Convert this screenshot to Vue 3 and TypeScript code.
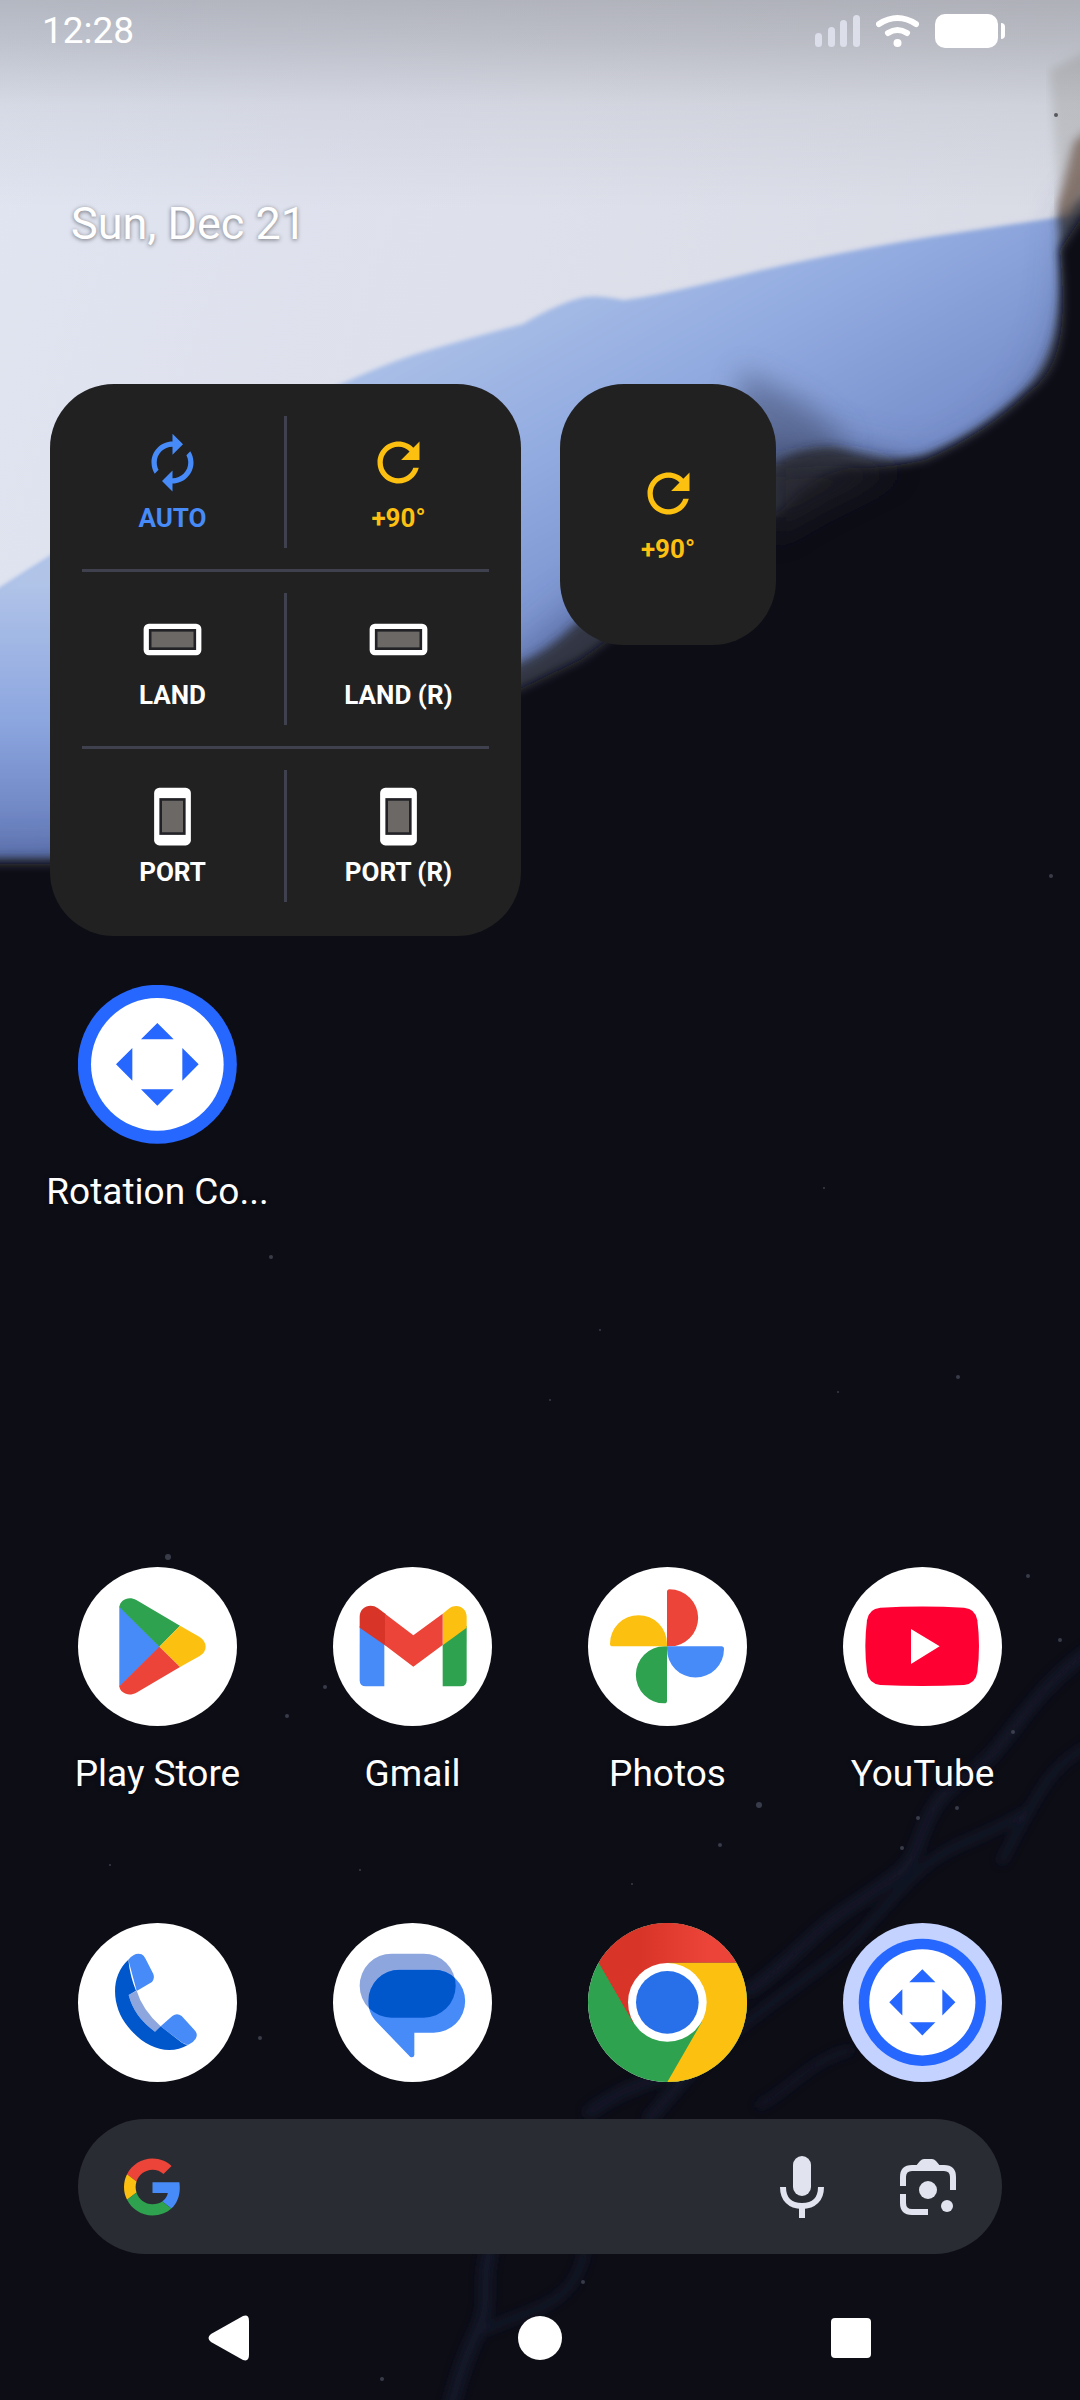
<script setup lang="ts">
type ActionIcon = 'auto' | 'turn' | 'land' | 'port'
interface Action { icon: ActionIcon; label: string; tone: string }
interface AppItem { id: string; name: string }
interface AppRow { kind: string; labels: boolean; apps: AppItem[] }

const actionRows: Action[][] = [
  [
    { icon: 'auto', label: 'AUTO', tone: 'blue' },
    { icon: 'turn', label: '+90°', tone: 'yellow' },
  ],
  [
    { icon: 'land', label: 'LAND', tone: 'white' },
    { icon: 'land', label: 'LAND (R)', tone: 'white' },
  ],
  [
    { icon: 'port', label: 'PORT', tone: 'white' },
    { icon: 'port', label: 'PORT (R)', tone: 'white' },
  ],
]

const turnPath =
  'M17.65 6.35C16.2 4.9 14.21 4 12 4c-4.42 0-7.99 3.58-7.99 8s3.57 8 7.99 8c3.73 0 6.84-2.55 7.73-6h-2.08c-.82 2.33-3.04 4-5.65 4-3.31 0-6-2.69-6-6s2.69-6 6-6c1.66 0 3.14.69 4.22 1.78L13 11h7V4l-2.35 2.35z'
const autoPath =
  'M12 6v3l4-4-4-4v3c-4.42 0-8 3.58-8 8 0 1.57.46 3.03 1.24 4.26L6.7 14.8c-.45-.83-.7-1.79-.7-2.8 0-3.31 2.69-6 6-6zm6.76 1.74L17.3 9.2c.44.84.7 1.79.7 2.8 0 3.31-2.69 6-6 6v-3l-4 4 4 4v-3c4.42 0 8-3.58 8-8 0-1.57-.46-3.03-1.24-4.26z'

const appRows: AppRow[] = [
  { kind: 'installed', labels: true, apps: [{ id: 'rotation', name: 'Rotation Co...' }] },
  {
    kind: 'favorites',
    labels: true,
    apps: [
      { id: 'play', name: 'Play Store' },
      { id: 'gmail', name: 'Gmail' },
      { id: 'photos', name: 'Photos' },
      { id: 'youtube', name: 'YouTube' },
    ],
  },
  {
    kind: 'dock',
    labels: false,
    apps: [
      { id: 'phone', name: 'Phone' },
      { id: 'messages', name: 'Messages' },
      { id: 'chrome', name: 'Chrome' },
      { id: 'rotation-themed', name: 'Rotation Control' },
    ],
  },
]

const petals = [
  { color: '#ec4438', turn: 0 },
  { color: '#478bf9', turn: 90 },
  { color: '#2ea24f', turn: 180 },
  { color: '#fcc011', turn: 270 },
]

const stars: [number, number, number][] = [
  [271, 1257, 2], [168, 1557, 3], [759, 1805, 3], [720, 1845, 2], [918, 1818, 2], [1060, 1640, 2],
  [1013, 1732, 2], [902, 1848, 2], [957, 1808, 2], [958, 1377, 2], [838, 1392, 1], [1051, 876, 2],
  [824, 1188, 1], [325, 1687, 2], [287, 1716, 2], [110, 1865, 1], [382, 2379, 2], [260, 2038, 2],
  [583, 2282, 2], [360, 1870, 1], [632, 1884, 1], [550, 1400, 1], [600, 1330, 1], [1028, 1576, 2],
]
</script>

<template>
  <main class="screen">
    <svg class="wallpaper" viewBox="0 0 1080 2400" preserveAspectRatio="xMidYMin slice" aria-hidden="true">
      <defs>
        <linearGradient id="paper" x1="0" y1="0" x2="1" y2="0.3">
          <stop offset="0" stop-color="#e0e5f1" />
          <stop offset="0.5" stop-color="#dee0eb" />
          <stop offset="1" stop-color="#d9dbe5" />
        </linearGradient>
        <linearGradient id="blue" gradientUnits="userSpaceOnUse" x1="440" y1="300" x2="620" y2="620">
          <stop offset="0" stop-color="#adc2e8" />
          <stop offset="0.5" stop-color="#92abe0" />
          <stop offset="1" stop-color="#7890cc" />
        </linearGradient>
        <linearGradient id="blueLeft" gradientUnits="userSpaceOnUse" x1="0" y1="580" x2="0" y2="870">
          <stop offset="0" stop-color="#b1c4e8" />
          <stop offset="0.5" stop-color="#8ba5df" />
          <stop offset="1" stop-color="#5f75b3" />
        </linearGradient>
        <linearGradient id="night" gradientUnits="userSpaceOnUse" x1="0" y1="400" x2="0" y2="2400">
          <stop offset="0" stop-color="#0f0f19" />
          <stop offset="0.7" stop-color="#0d0d17" />
          <stop offset="1" stop-color="#0b0b14" />
        </linearGradient>
        <linearGradient id="scrim" x1="0" y1="0" x2="0" y2="1">
          <stop offset="0" stop-color="#000" stop-opacity="0.2" />
          <stop offset="0.2" stop-color="#000" stop-opacity="0.15" />
          <stop offset="0.5" stop-color="#000" stop-opacity="0.05" />
          <stop offset="1" stop-color="#000" stop-opacity="0" />
        </linearGradient>
        <filter id="soft1" x="-10%" y="-10%" width="120%" height="120%"><feGaussianBlur stdDeviation="2" /></filter>
        <filter id="soft2" x="-10%" y="-10%" width="120%" height="120%"><feGaussianBlur stdDeviation="5" /></filter>
        <filter id="soft3" x="-20%" y="-20%" width="140%" height="140%"><feGaussianBlur stdDeviation="22" /></filter>
        <filter id="soft4" x="-50%" y="-50%" width="200%" height="200%"><feGaussianBlur stdDeviation="14" /></filter>
      </defs>
      <rect width="1080" height="1000" fill="url(#paper)" />
      <path
        filter="url(#soft1)"
        fill="url(#blue)"
        d="M-10 594L50 556L250 430Q300 400 341 384Q380 366 413 355Q470 338 523 324Q560 302 585 297Q600 295 623 300Q650 298 758 271Q850 250 930 237L1080 214V960H-10Z"
      />
      <path fill="url(#blueLeft)" filter="url(#soft1)" d="M-10 596L60 552V900H-10Z" />
      <path
        filter="url(#soft3)"
        fill="#31406f"
        opacity="0.5"
        d="M1100 190L1072 220C1076 330 1054 390 974 450C900 490 850 440 776 434C700 450 650 560 575 610C510 660 400 800 50 860H-40V1100H1130Z"
      />
      <path filter="url(#soft4)" fill="#4a5478" opacity="0.6" d="M740 370L800 400L850 440L800 480H740Z" />
      <path
        filter="url(#soft2)"
        fill="#29292e"
        opacity="0.8"
        d="M1090 160L1058 215C1064 300 1060 350 1027 388Q985 430 930 453Q895 466 840 448Q810 442 770 466C690 510 640 590 575 624Q550 650 518 664C420 700 300 840 50 858H-20V1000H1100Z"
      />
      <path
        filter="url(#soft2)"
        fill="url(#night)"
        d="M1100 190L1060 250C1068 330 1060 370 1029 392Q985 434 925 460Q880 470 850 468Q810 476 782 510C690 560 640 620 580 660Q560 670 518 690C420 740 300 850 50 864H-20V2440H1100Z"
      />
      <path filter="url(#soft4)" fill="#232329" opacity="0.7" d="M770 465L850 460L900 470L820 510L770 540Z" />
      <path filter="url(#soft2)" fill="#b4b6b8" opacity="0.55" d="M1050 70L1090 50V190L1060 210Z" />
      <path filter="url(#soft2)" fill="#7b675d" opacity="0.8" d="M1090 128L1074 142L1058 205L1064 222L1090 178Z" />
      <circle cx="1056" cy="115" r="2" fill="#5b5c62" />
      <g filter="url(#soft2)" fill="none" stroke="#161a30" stroke-linecap="round" opacity="0.7">
        <path stroke-width="12" d="M1090 1650C1020 1700 1010 1750 964 1778S925 1850 902 1870S850 1905 826 1925S780 1970 750 1990" />
        <path stroke-width="8" d="M1090 1745C1050 1765 1040 1790 1002 1860M1026 1812C980 1840 960 1840 930 1862S870 1930 830 1960S760 2010 700 2060" />
        <path stroke-width="12" d="M680 2070C640 2085 620 2090 590 2112M700 2060L650 2118" />
        <path stroke-width="7" d="M850 2050C810 2060 790 2090 760 2105" />
        <path stroke-width="14" d="M489 2254C480 2290 492 2300 478 2330S458 2380 450 2410" />
        <path stroke-width="8" d="M584 2254C576 2290 555 2302 530 2312S495 2325 485 2330" />
      </g>
      <g fill="#565b6b" opacity="0.6">
        <circle v-for="([x, y, r], i) in stars" :key="i" :cx="x" :cy="y" :r="r" />
      </g>
      <rect width="1080" height="210" fill="url(#scrim)" />
    </svg>

    <header class="status">
      <time class="clock">12:28</time>
      <div class="indicators">
        <svg width="45" height="34" viewBox="0 0 45 34" fill="#dcdeea" role="img" aria-label="Signal">
          <rect x="0" y="19" width="7" height="14" rx="3.5" />
          <rect x="13" y="13" width="7" height="20" rx="3.5" />
          <rect x="25" y="6" width="7" height="27" rx="3.5" />
          <rect x="38" y="1" width="7" height="32" rx="3.5" />
        </svg>
        <svg width="43" height="34" viewBox="0 0 43 34" fill="none" stroke="#fff" stroke-linecap="round" role="img" aria-label="Wi-Fi">
          <path stroke-width="6" d="M3 10Q21.500 -2 40 10" />
          <path stroke-width="6" d="M12 19Q21.500 13 31 19" />
          <circle cx="21.500" cy="29" r="4" fill="#fff" stroke="none" />
        </svg>
        <svg width="70" height="34" viewBox="0 0 70 34" fill="#fff" role="img" aria-label="Battery">
          <rect width="63" height="34" rx="10" />
          <path d="M66 9a4 4 0 0 1 4 4v8a4 4 0 0 1-4 4Z" />
        </svg>
      </div>
    </header>

    <p class="date">Sun, Dec 21</p>

    <section class="widgets">
      <div class="widget controls">
        <template v-for="(row, r) in actionRows" :key="r">
          <hr v-if="r > 0" />
          <div class="control-row">
            <button v-for="action in row" :key="action.label" type="button" class="action" :class="action.tone">
              <svg viewBox="0 0 24 24" width="63" height="63" fill="currentColor" aria-hidden="true">
                <path v-if="action.icon === 'auto'" :d="autoPath" />
                <path v-else-if="action.icon === 'turn'" :d="turnPath" />
                <template v-else-if="action.icon === 'land'">
                  <rect x="1" y="6" width="22" height="12" rx="2" />
                  <rect x="3" y="8" width="18" height="8" fill="#222226" />
                  <rect x="4" y="9" width="16" height="6" fill="#6b6865" />
                </template>
                <template v-else>
                  <rect x="5" y="1" width="14" height="22" rx="2" />
                  <rect x="7" y="5" width="10" height="14" fill="#222226" />
                  <rect x="8" y="6" width="8" height="12" fill="#6b6865" />
                </template>
              </svg>
              <span>{{ action.label }}</span>
            </button>
          </div>
        </template>
      </div>
      <div class="widget quick">
        <button type="button" class="action yellow">
          <svg viewBox="0 0 24 24" width="63" height="63" fill="currentColor" aria-hidden="true"><path :d="turnPath" /></svg>
          <span>+90°</span>
        </button>
      </div>
    </section>

    <nav v-for="row in appRows" :key="row.kind" class="apps" :class="row.kind" :aria-label="row.kind">
      <button v-for="app in row.apps" :key="app.id" type="button" class="app" :aria-label="app.name">
        <svg class="app-icon" viewBox="0 0 477 477" aria-hidden="true">
          <circle v-if="!app.id.startsWith('rotation')" cx="238.500" cy="238.500" r="238.500" fill="#fff" />
          <g v-if="app.id === 'play'">
            <path fill="#478bf9" d="M124 118L246 239L124 360Z" />
            <path fill="#2ea24f" d="M124 120C126 98 152 86 175 99L306 176L244 239Z" />
            <path fill="#fcc011" d="M306 176L365 210Q383 222 383 239T365 267L306 300L244 239Z" />
            <path fill="#ec4438" d="M244 239L306 300L175 377C152 390 126 378 124 358Z" />
          </g>
          <g v-else-if="app.id === 'gmail'">
            <path fill="#478bf9" d="M80 176L154 230V358H98Q80 358 80 340Z" />
            <path fill="#2ea24f" d="M401 176L329 230V358H383Q401 358 401 340Z" />
            <path fill="#fcc011" d="M329 140L349 124C371 107 401 121 401 150V182L329 235Z" />
            <path fill="#d93428" d="M80 182V150C80 120 112 107 135 124L158 141V236Z" />
            <path fill="#ec4438" d="M156 140L241 205L329 140V234L241 299L156 235Z" />
          </g>
          <g v-else-if="app.id === 'photos'">
            <path
              v-for="petal in petals"
              :key="petal.turn"
              :fill="petal.color"
              :transform="`rotate(${petal.turn} 237 238)`"
              d="M245 67A85.500 85.500 0 0 1 245 238H237V75Q237 67 245 67Z"
            />
          </g>
          <g v-else-if="app.id === 'youtube'">
            <path fill="#ff0033" d="M112 122Q238 115 363 122Q398 125 403 160Q413 238 403 315Q398 350 363 354Q238 360 112 354Q77 350 72 315Q62 238 72 160Q77 125 112 122Z" />
            <path fill="#fff" d="M204 186L290 238L204 291Z" />
          </g>
          <g v-else-if="app.id === 'phone'">
            <path fill="#8ea6de" d="M176 203Q192 258 248 310L231 326Q168 281 152 216Z" />
            <path fill="#478bf9" d="M151 110C165 93 179 89 191 94Q198 97 203 108L226 153Q231 166 222 177L176 204Z" />
            <path fill="#478bf9" d="M248 310L283 279Q297 269 311 279L350 322Q361 334 353 347Q345 360 331 365L315 361Z" />
            <path fill="#0057cc" d="M151 110C95 160 101 253 150 311C200 375 272 400 331 365Q322 366 312 359L248 310L231 326Q168 281 152 216L174 203Q156 160 151 110Z" />
          </g>
          <g v-else-if="app.id === 'messages'">
            <clipPath id="bubble">
              <path d="M200 140H302A94.500 94.500 0 0 1 302 329H244V396Q243 405 232 402L131 297C115 280 106 260 106 234A94 94 0 0 1 200 140Z" />
            </clipPath>
            <rect x="80" y="92" width="288" height="192" rx="96" fill="#8ea6de" />
            <path fill="#478bf9" d="M200 140H302A94.500 94.500 0 0 1 302 329H244V396Q243 405 232 402L131 297C115 280 106 260 106 234A94 94 0 0 1 200 140Z" />
            <rect x="80" y="92" width="288" height="192" rx="96" fill="#0057cc" clip-path="url(#bubble)" />
          </g>
          <g v-else-if="app.id === 'chrome'">
            <linearGradient id="chromeRed"><stop offset="0.3" stop-color="#d93428" /><stop offset="0.8" stop-color="#ec4438" /></linearGradient>
            <circle cx="238.500" cy="238.500" r="238.500" fill="#2ea24f" />
            <path fill="#fcc011" d="M445 119A238.500 238.500 0 0 1 238 477L341 298L238 119Z" />
            <path fill="url(#chromeRed)" d="M32 119A238.500 238.500 0 0 1 445 119H238V238L135 298Z" />
            <circle cx="238" cy="238" r="118" fill="#fff" />
            <circle cx="238" cy="238" r="94" fill="#2870e9" />
          </g>
          <g v-else>
            <circle v-if="app.id === 'rotation-themed'" cx="238.500" cy="238.500" r="238.500" fill="#c4d2ff" />
            <g :transform="app.id === 'rotation-themed' ? 'translate(238 238) scale(0.8)' : 'translate(238 238)'">
              <circle r="238.500" fill="#2667ff" />
              <circle r="199" fill="#fff" />
              <path fill="#2667ff" d="M0-124L49-75H-49ZM0 124L49 75H-49ZM-124 0L-75-49V49ZM124 0L75-49V49Z" />
            </g>
          </g>
        </svg>
        <span v-if="row.labels" class="app-name">{{ app.name }}</span>
      </button>
    </nav>

    <form class="search" role="search" @submit.prevent>
      <svg width="57" height="58" viewBox="0 0 48 48" aria-hidden="true">
        <path fill="#ec4438" d="M24 9.500c3.540 0 6.710 1.220 9.210 3.600l6.850-6.850C35.900 2.380 30.470 0 24 0 14.620 0 6.510 5.380 2.560 13.220l7.980 6.190C12.430 13.720 17.740 9.500 24 9.500z" />
        <path fill="#478bf9" d="M46.980 24.550c0-1.570-.15-3.090-.38-4.550H24v9.020h12.940c-.58 2.960-2.260 5.480-4.780 7.180l7.730 6c4.510-4.180 7.090-10.360 7.090-17.650z" />
        <path fill="#fcc011" d="M10.530 28.590c-.48-1.450-.76-2.990-.76-4.590s.27-3.140.76-4.590l-7.980-6.190C.92 16.460 0 20.120 0 24c0 3.880.92 7.540 2.560 10.780l7.970-6.190z" />
        <path fill="#2ea24f" d="M24 48c6.480 0 11.930-2.130 15.890-5.810l-7.730-6c-2.150 1.450-4.920 2.300-8.160 2.300-6.260 0-11.570-4.220-13.470-9.910l-7.980 6.190C6.510 42.620 14.620 48 24 48z" />
      </svg>
      <input type="search" aria-label="Search" />
      <button type="button" aria-label="Voice search">
        <svg width="44" height="62" viewBox="0 0 44 62" aria-hidden="true">
          <rect x="13" y="0" width="18" height="40" rx="9" fill="#e1e4ef" />
          <path fill="none" stroke="#e1e4ef" stroke-width="6" d="M3 31C3 43 10 50 22 50S41 43 41 31M22 50V62" />
        </svg>
      </button>
      <button type="button" aria-label="Search with camera">
        <svg width="56" height="56" viewBox="0 0 56 56" aria-hidden="true">
          <path fill="#e1e4ef" d="M15 8L20 2Q22 0 24 0H32Q34 0 36 2L41 8Z" />
          <path fill="none" stroke="#e1e4ef" stroke-width="6" d="M3 27V18Q3 9 12 9H44Q53 9 53 18V31M3 35V44Q3 53 12 53H28" />
          <circle cx="28" cy="31" r="9" fill="#e1e4ef" />
          <circle cx="47" cy="47" r="6" fill="#e1e4ef" />
        </svg>
      </button>
    </form>

    <nav class="system" aria-label="System">
      <button type="button" aria-label="Back">
        <svg width="46" height="46" viewBox="0 0 46 46"><path fill="#fff" d="M37 1Q43 -1 43 6V40Q43 47 37 45L5 27Q0 23 5 19Z" /></svg>
      </button>
      <button type="button" aria-label="Home">
        <svg width="46" height="46" viewBox="0 0 46 46"><circle cx="23" cy="23" r="22" fill="#fff" /></svg>
      </button>
      <button type="button" aria-label="Recent apps">
        <svg width="46" height="46" viewBox="0 0 46 46"><rect x="3" y="3" width="40" height="40" rx="4" fill="#fff" /></svg>
      </button>
    </nav>
  </main>
</template>

<style>
body {
  margin: 0;
  background: #0d0d17;
}
</style>

<style scoped>
.screen {
  position: relative;
  isolation: isolate;
  display: flex;
  flex-direction: column;
  min-height: 100vh;
  overflow: hidden;
  color: #fff;
  font-family: Roboto, 'Noto Sans', sans-serif;
}

.wallpaper {
  position: absolute;
  inset: 0;
  z-index: -1;
  width: 100%;
  height: 100%;
}

button {
  margin: 0;
  padding: 0;
  border: 0;
  background: none;
  color: inherit;
  font: inherit;
  cursor: pointer;
}

svg {
  display: block;
}

.status {
  display: flex;
  align-items: center;
  justify-content: space-between;
  height: 62px;
  padding: 0 75px 0 42px;
}

.clock {
  font-size: 37px;
  line-height: 44px;
}

.indicators {
  display: flex;
  gap: 16px;
}

.date {
  margin: 134px 71px 132px;
  font-size: 45px;
  line-height: 56px;
  text-shadow: 0 1px 4px rgba(0, 0, 0, 0.5);
}

.widgets {
  display: grid;
  grid-template-columns: 471fr 216fr 215fr;
  gap: 39px;
  align-items: start;
  padding: 0 50px;
}

.widget {
  box-sizing: border-box;
  padding: 32px 32px 34px;
  border-radius: 64px;
  background: #212121;
}

.control-row {
  display: grid;
  grid-template-columns: 1fr 1fr;
  column-gap: 45px;
  background: linear-gradient(#40414f, #40414f) center / 3px 100% no-repeat;
}

hr {
  height: 3px;
  margin: 21px 0;
  border: 0;
  background: #40414f;
}

.action {
  display: flex;
  flex-direction: column;
  align-items: center;
  justify-content: center;
  gap: 8px;
  width: 100%;
  min-height: 132px;
  font-size: 26px;
  font-weight: 700;
  line-height: 32px;
  white-space: nowrap;
}

.blue {
  color: #478bf9;
}

.yellow {
  color: #fcc011;
}

.white {
  color: #fff;
}

.quick {
  display: grid;
  align-items: center;
  min-height: 261px;
}

.apps {
  display: grid;
  grid-template-columns: repeat(4, 1fr);
  padding: 0 30px;
}

.installed {
  margin-top: 49px;
}

.favorites {
  margin-top: auto;
}

.dock {
  margin-top: 127px;
}

.app {
  display: flex;
  flex-direction: column;
  align-items: center;
  gap: 26px;
}

.app-icon {
  width: 159px;
  height: 159px;
}

.app-name {
  font-size: 37px;
  line-height: 44px;
  white-space: nowrap;
  text-shadow: 0 1px 4px rgba(0, 0, 0, 0.5);
}

.search {
  display: flex;
  align-items: center;
  height: 135px;
  margin: 37px 78px 21px;
  padding: 0 42px 0 46px;
  box-sizing: border-box;
  border-radius: 68px;
  background: #2a2c33;
}

.search input {
  flex: 1;
  min-width: 0;
  height: 64px;
  padding: 0 24px;
  border: 0;
  outline: 0;
  background: none;
  color: inherit;
  font: inherit;
  font-size: 37px;
}

.search button {
  display: grid;
  place-items: center;
  width: 64px;
  height: 64px;
}

.search button + button {
  margin-left: 62px;
}

.system {
  display: grid;
  grid-template-columns: repeat(3, 1fr);
  height: 125px;
  padding: 0 73px;
}

.system button {
  display: grid;
  place-items: center;
}
</style>
